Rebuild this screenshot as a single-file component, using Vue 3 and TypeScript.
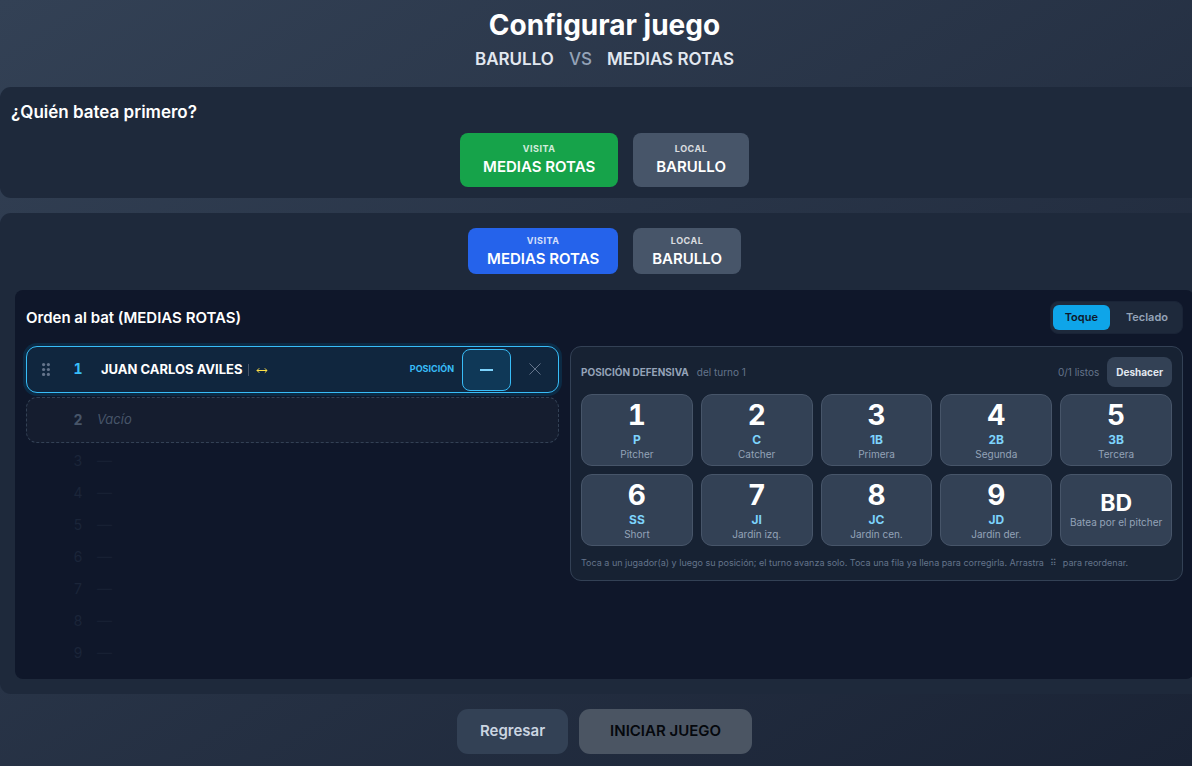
<script setup lang="ts">
import { ref } from 'vue'

interface PositionKey {
  main: string
  code?: string
  label: string
}

const teams = [
  { side: 'VISITA', name: 'MEDIAS ROTAS' },
  { side: 'LOCAL', name: 'BARULLO' },
]

const battingFirst = ref(0)
const activeTeam = ref(0)
const inputMode = ref('Toque')
const modes = ['Toque', 'Teclado']
const pendingTurns = [3, 4, 5, 6, 7, 8, 9]

const positions: PositionKey[] = [
  { main: '1', code: 'P', label: 'Pitcher' },
  { main: '2', code: 'C', label: 'Catcher' },
  { main: '3', code: '1B', label: 'Primera' },
  { main: '4', code: '2B', label: 'Segunda' },
  { main: '5', code: '3B', label: 'Tercera' },
  { main: '6', code: 'SS', label: 'Short' },
  { main: '7', code: 'JI', label: 'Jardín izq.' },
  { main: '8', code: 'JC', label: 'Jardín cen.' },
  { main: '9', code: 'JD', label: 'Jardín der.' },
  { main: 'BD', label: 'Batea por el pitcher' },
]
</script>

<template>
  <div class="viewport">
    <main class="page">
      <header class="page-head">
        <h1>Configurar juego</h1>
        <p class="matchup">
          <span>BARULLO</span><span class="versus">VS</span><span>MEDIAS ROTAS</span>
        </p>
      </header>

      <section class="card first-card">
        <h2>¿Quién batea primero?</h2>
        <div class="team-row">
          <button
            v-for="(team, i) in teams"
            :key="team.side"
            type="button"
            class="team large"
            :class="{ green: battingFirst === i }"
            @click="battingFirst = i"
          >
            <span class="side">{{ team.side }}</span>
            <span class="team-name">{{ team.name }}</span>
          </button>
        </div>
      </section>

      <section class="card lineup-card">
        <div class="team-row">
          <button
            v-for="(team, i) in teams"
            :key="team.side"
            type="button"
            class="team"
            :class="{ blue: activeTeam === i }"
            @click="activeTeam = i"
          >
            <span class="side">{{ team.side }}</span>
            <span class="team-name">{{ team.name }}</span>
          </button>
        </div>

        <div class="lineup">
          <div class="lineup-head">
            <h3>Orden al bat (MEDIAS ROTAS)</h3>
            <div class="modes">
              <button
                v-for="mode in modes"
                :key="mode"
                type="button"
                :class="{ on: inputMode === mode }"
                @click="inputMode = mode"
              >{{ mode }}</button>
            </div>
          </div>

          <div class="columns">
            <ol class="turns">
              <li class="turn active">
                <svg class="grip" viewBox="0 0 8 13" aria-hidden="true">
                  <g v-for="y in [1.6, 6.5, 11.4]" :key="y">
                    <circle cx="1.6" :cy="y" r="1.6" />
                    <circle cx="6.4" :cy="y" r="1.6" />
                  </g>
                </svg>
                <span class="num">1</span>
                <span class="player">JUAN CARLOS AVILES</span>
                <span class="divider"></span>
                <svg class="swap" viewBox="0 0 12 8" aria-hidden="true">
                  <path d="M1 4.5H11M3.2 2.3L1 4.5L3.2 6.7M8.8 2.3L11 4.5L8.8 6.7" />
                </svg>
                <span class="pos-label">POSICIÓN</span>
                <button type="button" class="pos-slot" aria-label="Elegir posición">
                  <svg viewBox="0 0 13 2" aria-hidden="true"><path d="M0 1H13" /></svg>
                </button>
                <button type="button" class="remove" aria-label="Quitar">
                  <svg viewBox="0 0 12 12" aria-hidden="true"><path d="M.5 .5L11.5 11.5M11.5 .5L.5 11.5" /></svg>
                </button>
              </li>
              <li class="turn empty">
                <span class="num">2</span>
                <span class="vacant">Vacío</span>
              </li>
              <li v-for="n in pendingTurns" :key="n" class="turn pending">
                <span class="num">{{ n }}</span>
                <span class="dash">—</span>
              </li>
            </ol>

            <div class="pad">
              <div class="pad-head">
                <span class="pad-title">POSICIÓN DEFENSIVA</span>
                <span class="pad-turn">del turno 1</span>
                <span class="pad-count">0/1 listos</span>
                <button type="button" class="undo">Deshacer</button>
              </div>
              <div class="keys">
                <button v-for="p in positions" :key="p.main" type="button" class="key">
                  <span class="key-main" :class="{ word: !p.code }">{{ p.main }}</span>
                  <span v-if="p.code" class="key-code">{{ p.code }}</span>
                  <span class="key-label">{{ p.label }}</span>
                </button>
              </div>
              <p class="hint">
                <span>Toca a un jugador(a) y luego su posición; el turno avanza solo. Toca una fila ya llena para corregirla. Arrastra</span>
                <span class="hint-grip">⠿</span>
                <span>para reordenar.</span>
              </p>
            </div>
          </div>
        </div>
      </section>

      <footer class="actions">
        <button type="button" class="back">Regresar</button>
        <button type="button" class="start" disabled>INICIAR JUEGO</button>
      </footer>
    </main>
  </div>
</template>

<style>
body {
  background: #1e293b;
}
</style>

<style scoped>
* {
  box-sizing: border-box;
}
.viewport {
  min-height: 100vh;
  overflow-x: clip;
  background: linear-gradient(to bottom right, #334155, #1a2335);
  font-family: Inter, "Liberation Sans", sans-serif;
  font-size: 15px;
  color: #fff;
}
.page {
  margin-right: -17px;
  padding: 4px 0 12px;
  display: flex;
  flex-direction: column;
  gap: 15px;
}
h1, h2, h3, p, ol {
  margin: 0;
  padding: 0;
}
button {
  border: 0;
  font: inherit;
  color: inherit;
  cursor: pointer;
}
.page-head {
  text-align: center;
}
h1 {
  font-size: 28px;
  line-height: 42px;
  font-weight: 700;
}
.matchup {
  display: flex;
  justify-content: center;
  gap: 15px;
  font-size: 17px;
  line-height: 26px;
  font-weight: 600;
  color: #e2e8f0;
}
.versus {
  color: #94a3b8;
  font-weight: 500;
}
.card {
  background: #1e293b;
  border-radius: 11px;
}
.first-card {
  padding: 11px;
}
h2 {
  font-size: 17px;
  line-height: 29px;
  font-weight: 600;
  margin-bottom: 6px;
}
.team-row {
  display: flex;
  justify-content: center;
  gap: 15px;
}
.team {
  display: flex;
  flex-direction: column;
  align-items: center;
  padding: 6px 19px 4px;
  border-radius: 8px;
  background: #475569;
}
.team.large {
  padding: 9px 23px;
}
.team.green {
  background: #16a34a;
}
.team.blue {
  background: #2563eb;
}
.side {
  font-size: 9px;
  line-height: 13px;
  font-weight: 700;
  letter-spacing: 0.5px;
  opacity: 0.8;
}
.team-name {
  font-size: 15px;
  line-height: 23px;
  font-weight: 600;
}
.lineup-card {
  padding: 15px;
}
.lineup {
  margin-top: 16px;
  padding: 11px 11px 12px;
  border-radius: 8px;
  background: #0f172a;
}
.lineup-head {
  display: flex;
  justify-content: space-between;
  align-items: center;
  margin-bottom: 12px;
}
h3 {
  font-size: 15px;
  font-weight: 600;
}
.modes {
  display: flex;
  gap: 4px;
  padding: 3px 2px;
  border: 1px solid #1a2437;
  border-radius: 8px;
  background: #1e293b;
}
.modes button {
  padding: 0 12px;
  border-radius: 6px;
  background: none;
  font-size: 11px;
  line-height: 25px;
  font-weight: 600;
  color: #94a3b8;
}
.modes .on {
  background: #0ea5e9;
  color: #0f172a;
}
.columns {
  display: grid;
  grid-template-columns: 1fr 1.15fr;
  gap: 11px;
  align-items: start;
}
.turns {
  list-style: none;
  display: flex;
  flex-direction: column;
  gap: 4px;
}
.turn {
  display: flex;
  align-items: center;
  height: 28px;
  border: 1px solid transparent;
  border-radius: 11px;
}
.num,
.player,
.vacant,
.dash,
.pos-label {
  padding-bottom: 2px;
}
.num {
  width: 24px;
  margin-left: 39px;
  text-align: center;
  font-size: 14px;
  font-variant-numeric: tabular-nums;
}
.turn.active {
  height: 47px;
  background: #10263e;
  border-color: #38bdf8;
  box-shadow: 0 0 0 3px #0c2a44;
}
.grip {
  width: 8px;
  height: 13px;
  margin-left: 15px;
  fill: #64748b;
}
.active .num {
  margin-left: 16px;
  font-weight: 700;
  color: #38bdf8;
}
.player {
  margin-left: 11px;
  font-size: 13px;
  font-weight: 700;
}
.divider {
  width: 1px;
  height: 12px;
  margin: 0 7px 0 6px;
  background: #475569;
}
.swap {
  width: 12px;
  height: 8px;
  fill: none;
  stroke: #fde047;
  stroke-width: 1;
}
.pos-label {
  margin-left: auto;
  font-size: 9px;
  font-weight: 700;
  color: #38bdf8;
}
.pos-slot {
  display: grid;
  place-items: center;
  width: 49px;
  height: 42px;
  margin-left: 8px;
  padding: 0;
  border: 1px solid #38bdf8;
  border-radius: 8px;
  background: #0f3857;
}
.pos-slot svg {
  width: 13px;
  height: 2px;
  stroke: #7dd3fc;
  stroke-width: 2;
}
.remove {
  display: grid;
  place-items: center;
  width: 32px;
  height: 32px;
  margin: 0 7px 0 8px;
  padding: 0 0 2px;
  background: none;
}
.remove svg {
  width: 12px;
  height: 12px;
  stroke: #64748b;
}
.turn.empty {
  height: 46px;
  border: 1px dashed #334155;
  background: #151d2f;
  color: #475569;
}
.empty .num {
  font-weight: 700;
}
.vacant {
  margin-left: 7px;
  font-size: 13px;
  font-style: italic;
}
.pending {
  color: #1b2539;
}
.dash {
  margin-left: 7px;
  color: #172033;
}
.pad {
  padding: 10px;
  border: 1px solid #334155;
  border-radius: 11px;
  background: #172233;
}
.pad-head {
  display: flex;
  align-items: center;
  margin-bottom: 7px;
  font-size: 10px;
  color: #64748b;
}
.pad-title {
  font-weight: 700;
  color: #94a3b8;
}
.pad-turn {
  margin-left: 8px;
}
.pad-count {
  margin-left: auto;
}
.undo {
  margin-left: 8px;
  padding: 0 9px;
  border-radius: 8px;
  background: #334155;
  line-height: 30px;
  font-weight: 700;
  color: #e2e8f0;
}
.keys {
  display: grid;
  grid-template-columns: repeat(5, 1fr);
  gap: 8px;
}
.key {
  display: flex;
  flex-direction: column;
  align-items: center;
  justify-content: center;
  height: 72px;
  padding: 0;
  border: 1px solid #475569;
  border-radius: 11px;
  background: #334155;
}
.key-main {
  font-size: 28px;
  line-height: 33px;
  font-weight: 700;
  font-variant-numeric: tabular-nums;
}
.key-main.word {
  font-size: 23px;
  line-height: 24px;
}
.key-code {
  font-size: 12px;
  line-height: 15px;
  font-weight: 700;
  color: #7dd3fc;
}
.key-label {
  font-size: 10px;
  line-height: 14px;
  color: #94a3b8;
}
.hint {
  display: flex;
  flex-wrap: wrap;
  gap: 0 6px;
  margin-top: 9px;
  font-size: 9px;
  line-height: 15px;
  color: #64748b;
}
.actions {
  display: flex;
  justify-content: center;
  gap: 11px;
}
.actions button {
  padding: 0 23px 2px;
  border-radius: 11px;
  font-size: 15px;
  line-height: 43px;
  font-weight: 600;
}
.back {
  background: #334155;
  color: #cbd5e1;
}
.actions .start {
  padding: 0 31px 2px;
  background: #4b5563;
  color: #05080d;
  cursor: default;
}
</style>
